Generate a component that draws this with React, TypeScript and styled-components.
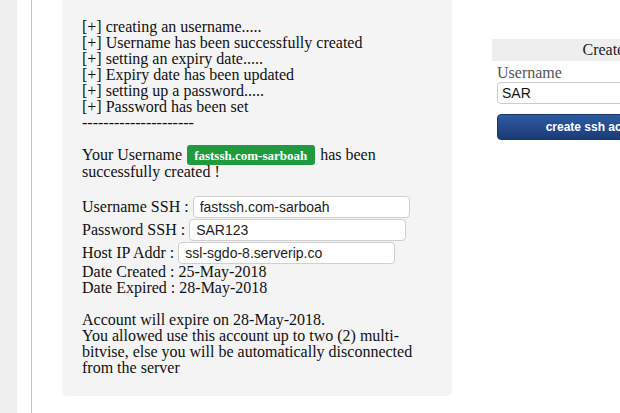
import React from "react";
import styled, { createGlobalStyle } from "styled-components";

const Global = createGlobalStyle`
  html, body { margin: 0; padding: 0; background: #fff; }
  body { width: 620px; height: 413px; overflow: hidden; font-family: "Liberation Serif", "Times New Roman", serif; color: #111; }
`;

const Page = styled.div`
  display: flex;
  align-items: stretch;
  height: 413px;
`;

const LeftStrip = styled.div`
  width: 17px;
  flex: none;
  background: #efefef;
`;

const Divider = styled.div`
  width: 1px;
  flex: none;
  margin-left: 14px;
  background: #c4c4c4;
`;

const Main = styled.div`
  display: flex;
  align-items: flex-start;
  padding-left: 30px;
  gap: 40px;
`;

const Panel = styled.div`
  width: 350px;
  flex: none;
  background: #f4f4f4;
  border-radius: 0 0 5px 5px;
  padding: 19px 20px 20px 20px;
  font-size: 16px;
  line-height: 16px;
`;

const Line = styled.div<{ $gap?: number }>`
  margin-top: ${(p) => p.$gap ?? 0}px;
`;

const Badge = styled.span`
  background: #1f9a3f;
  color: #fff;
  font-weight: bold;
  font-size: 13px;
  line-height: 16px;
  padding: 3px 8px 2px 7px;
  border-radius: 3px;
  margin: 0 1px 0 1px;
`;

const Spacer = styled.div<{ $h: number }>`
  height: ${(p) => p.$h}px;
`;

const FieldRow = styled.div`
  display: flex;
  align-items: center;
  height: 23px;
`;

const Label = styled.span`
  white-space: pre;
`;

const Input = styled.input`
  width: 217px;
  height: 22px;
  box-sizing: border-box;
  border: 1px solid #cfcfcf;
  border-radius: 4px;
  background: #fff;
  font-family: "Liberation Sans", Arial, sans-serif;
  font-size: 14px;
  color: #222;
  padding: 0 6px;
  margin-left: 4px;
  outline: none;
`;

const Side = styled.div`
  width: 280px;
  flex: none;
  margin-top: 39px;
`;

const SideHeader = styled.div`
  background: #eeeeee;
  height: 22px;
  line-height: 22px;
  text-align: center;
  font-size: 16px;
  color: #222;
`;

const SideBody = styled.div`
  padding: 3px 5px;
`;

const SideLabel = styled.div`
  color: #555;
  font-size: 16px;
  line-height: 18px;
`;

const SideInput = styled.input`
  width: 100%;
  box-sizing: border-box;
  height: 22px;
  border: 1px solid #ccc;
  border-radius: 4px;
  padding: 0 4px;
  font-family: "Liberation Sans", Arial, sans-serif;
  font-size: 14px;
  color: #111;
  outline: none;
`;

const SideButton = styled.button`
  display: block;
  width: 206px;
  height: 26px;
  margin-top: 10px;
  border: 1px solid #1b3566;
  border-radius: 4px;
  background: linear-gradient(#2f5aa3, #1c3b78);
  color: #fff;
  font-family: "Liberation Sans", Arial, sans-serif;
  font-weight: bold;
  font-size: 12px;
  cursor: pointer;
`;

export default function App() {
  return (
    <>
      <Global />
      <Page>
        <LeftStrip />
        <Divider />
        <Main>
          <Panel>
            <Line>[+] creating an username.....</Line>
            <Line>[+] Username has been successfully created</Line>
            <Line>[+] setting an expiry date.....</Line>
            <Line>[+] Expiry date has been updated</Line>
            <Line>[+] setting up a password.....</Line>
            <Line>[+] Password has been set</Line>
            <Line>---------------------</Line>
            <Line $gap={16}>
              Your Username <Badge>fastssh.com-sarboah</Badge> has been successfully created !
            </Line>
            <Spacer $h={15} />
            <FieldRow>
              <Label>Username SSH :</Label>
              <Input readOnly value="fastssh.com-sarboah" />
            </FieldRow>
            <FieldRow>
              <Label>Password SSH :</Label>
              <Input readOnly value="SAR123" />
            </FieldRow>
            <FieldRow>
              <Label>Host IP Addr :</Label>
              <Input readOnly value="ssl-sgdo-8.serverip.co" />
            </FieldRow>
            <Line>Date Created : 25-May-2018</Line>
            <Line>Date Expired : 28-May-2018</Line>
            <Line $gap={16}>Account will expire on 28-May-2018.</Line>
            <Line>
              You allowed use this account up to two (2) multi-bitvise, else you will be automatically
              disconnected from the server
            </Line>
          </Panel>
          <Side>
            <SideHeader>Create Account</SideHeader>
            <SideBody>
              <SideLabel>Username</SideLabel>
              <SideInput readOnly value="SAR" />
              <SideButton>create ssh account</SideButton>
            </SideBody>
          </Side>
        </Main>
      </Page>
    </>
  );
}
